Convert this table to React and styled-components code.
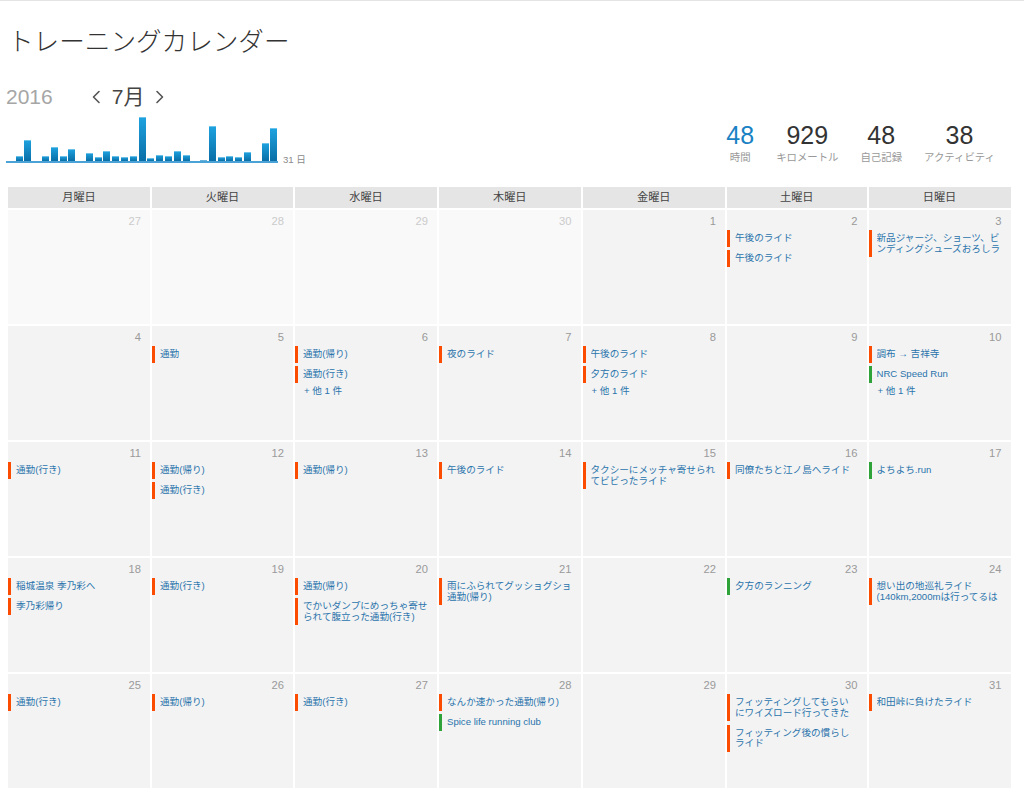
import React from 'react';
import styled, { createGlobalStyle } from 'styled-components';

const GlobalStyle = createGlobalStyle`
  html, body { margin: 0; padding: 0; background: #fff; }
  body {
    font-family: "Liberation Sans", "Noto Sans CJK JP", sans-serif;
    color: #333;
  }
`;

const Page = styled.div`
  border-top: 1px solid #e4e4e4;
  padding: 0 13px 10px 8px;
`;

const Top = styled.div`
  display: flex;
  justify-content: space-between;
  align-items: flex-end;
`;

const Left = styled.div`
  display: flex;
  flex-direction: column;
`;

const Title = styled.h1`
  margin: 28px 0 0;
  font-size: 25.6px;
  line-height: 26px;
  font-weight: 300;
  color: #333;
`;

const MonthRow = styled.div`
  display: flex;
  align-items: center;
  height: 24px;
  margin-top: 30px;
`;

const Year = styled.span`
  font-size: 21px;
  line-height: 24px;
  color: #a6a6a6;
  margin-left: -2px;
`;

const Nav = styled.div`
  display: flex;
  align-items: center;
  gap: 11px;
  margin-left: 38px;
`;

const Month = styled.span`
  font-size: 21px;
  line-height: 24px;
  color: #444;
`;

const ChartRow = styled.div`
  display: flex;
  align-items: flex-end;
  margin-top: 8px;
  margin-left: -2px;
`;

const Chart = styled.div`
  display: flex;
  align-items: flex-end;
  width: 272px;
  height: 44px;
  border-bottom: 2px solid #4aa2d6;
`;

const Slot = styled.div`
  flex: 1;
  display: flex;
  align-items: flex-end;
  justify-content: center;
  height: 100%;
`;

const Bar = styled.div`
  width: 7px;
  background: linear-gradient(#1ea3e0, #0a6ea6);
  box-shadow: inset 0 1px 0 rgba(255,255,255,0.35);
`;

const ChartLabel = styled.span`
  font-size: 9.6px;
  line-height: 11px;
  color: #8a8a8a;
  margin-left: 5px;
  margin-bottom: -2px;
`;

const Stats = styled.div`
  display: flex;
  margin-right: 5px;
  margin-bottom: -1px;
`;

const Stat = styled.div`
  display: flex;
  flex-direction: column;
  align-items: center;
  padding: 0 11px;
`;

const StatNum = styled.span`
  font-size: 25px;
  line-height: 24px;
  color: ${p => (p.$accent ? '#1a82c4' : '#333')};
`;

const StatLabel = styled.span`
  margin-top: 5px;
  font-size: 10.4px;
  line-height: 12px;
  color: #999;
`;

const Calendar = styled.div`
  display: grid;
  grid-template-columns: 142px 141px 142px 141.5px 142.5px 139.5px 142px;
  grid-template-rows: 21px repeat(5, 114px);
  gap: 2px;
  margin-top: 24px;
`;

const HeadCell = styled.div`
  background: #e5e5e5;
  font-size: 11.2px;
  line-height: 21px;
  text-align: center;
  color: #444;
`;

const Cell = styled.div`
  background: ${p => (p.$other ? '#f9f9f9' : '#f3f3f3')};
  padding-top: 5px;
  overflow: hidden;
  display: flex;
  flex-direction: column;
`;

const DayNum = styled.div`
  text-align: right;
  padding-right: 9px;
  font-size: 11.2px;
  line-height: 13px;
  color: ${p => (p.$other ? '#cbcbcb' : '#9a9a9a')};
`;

const Events = styled.div`
  display: flex;
  flex-direction: column;
  gap: 3.5px;
  margin-top: 2px;
  padding-right: 8.5px;
`;

const Event = styled.div`
  border-left: 3px solid ${p => (p.$type === 'run' ? '#2fa23a' : '#fc4c02')};
  padding: 3px 0 3px 5px;
`;

const EventText = styled.div`
  font-size: 9.6px;
  line-height: 10.6px;
  max-height: 21.2px;
  overflow: hidden;
  color: #2a74ac;
`;

const More = styled.div`
  padding-left: 9px;
  font-size: 9.6px;
  line-height: 10.6px;
  color: #2a74ac;
`;

const Chevron = ({ dir }) => (
  <svg width="10" height="16" viewBox="0 0 10 16" fill="none">
    <polyline
      points={dir === 'left' ? '8,2.5 2.5,8 8,13.5' : '2,2.5 7.5,8 2,13.5'}
      stroke="#555"
      strokeWidth="1.6"
      strokeLinecap="round"
      strokeLinejoin="round"
    />
  </svg>
);

const bars = [0, 5, 21, 0, 5, 14, 5.5, 12, 0, 8, 4, 10, 5.5, 4, 5.5, 44, 3, 6, 5, 10, 6, 0, 1.3, 35, 4.5, 5, 4.5, 9, 0, 18, 33];

const heads = ['月曜日', '火曜日', '水曜日', '木曜日', '金曜日', '土曜日', '日曜日'];

const R = 'ride';
const N = 'run';

const cells = [
  { d: 27, other: true }, { d: 28, other: true }, { d: 29, other: true }, { d: 30, other: true },
  { d: 1 },
  { d: 2, ev: [['午後のライド', R], ['午後のライド', R]] },
  { d: 3, ev: [['新品ジャージ、ショーツ、ビンディングシューズおろしライド', R]] },

  { d: 4 },
  { d: 5, ev: [['通勤', R]] },
  { d: 6, ev: [['通勤(帰り)', R], ['通勤(行き)', R]], more: 1 },
  { d: 7, ev: [['夜のライド', R]] },
  { d: 8, ev: [['午後のライド', R], ['夕方のライド', R]], more: 1 },
  { d: 9 },
  { d: 10, ev: [['調布 → 吉祥寺', R], ['NRC Speed Run', N]], more: 1 },

  { d: 11, ev: [['通勤(行き)', R]] },
  { d: 12, ev: [['通勤(帰り)', R], ['通勤(行き)', R]] },
  { d: 13, ev: [['通勤(帰り)', R]] },
  { d: 14, ev: [['午後のライド', R]] },
  { d: 15, ev: [['タクシーにメッチャ寄せられてビビったライド', R]] },
  { d: 16, ev: [['同僚たちと江ノ島へライド', R]] },
  { d: 17, ev: [['よちよち.run', N]] },

  { d: 18, ev: [['稲城温泉 季乃彩へ', R], ['季乃彩帰り', R]] },
  { d: 19, ev: [['通勤(行き)', R]] },
  { d: 20, ev: [['通勤(帰り)', R], ['でかいダンプにめっちゃ寄せられて腹立った通勤(行き)', R]] },
  { d: 21, ev: [['雨にふられてグッショグショ通勤(帰り)', R]] },
  { d: 22 },
  { d: 23, ev: [['夕方のランニング', N]] },
  { d: 24, ev: [['想い出の地巡礼ライド (140km,2000mは行ってるはず)', R]] },

  { d: 25, ev: [['通勤(行き)', R]] },
  { d: 26, ev: [['通勤(帰り)', R]] },
  { d: 27, ev: [['通勤(行き)', R]] },
  { d: 28, ev: [['なんか速かった通勤(帰り)', R], ['Spice life running club', N]] },
  { d: 29 },
  { d: 30, ev: [['フィッティングしてもらいにワイズロード行ってきた', R], ['フィッティング後の慣らしライド', R]] },
  { d: 31, ev: [['和田峠に負けたライド', R]] },
];

const stats = [
  { n: '48', l: '時間', accent: true },
  { n: '929', l: 'キロメートル' },
  { n: '48', l: '自己記録' },
  { n: '38', l: 'アクティビティ' },
];

export default function App() {
  return (
    <Page>
      <GlobalStyle />
      <Top>
        <Left>
          <Title>トレーニングカレンダー</Title>
          <MonthRow>
            <Year>2016</Year>
            <Nav>
              <Chevron dir="left" />
              <Month>7月</Month>
              <Chevron dir="right" />
            </Nav>
          </MonthRow>
          <ChartRow>
            <Chart>
              {bars.map((h, i) => (
                <Slot key={i}>{h > 0 && <Bar style={{ height: `${h}px` }} />}</Slot>
              ))}
            </Chart>
            <ChartLabel>31 日</ChartLabel>
          </ChartRow>
        </Left>
        <Stats>
          {stats.map((s, i) => (
            <Stat key={i}>
              <StatNum $accent={s.accent}>{s.n}</StatNum>
              <StatLabel>{s.l}</StatLabel>
            </Stat>
          ))}
        </Stats>
      </Top>
      <Calendar>
        {heads.map(h => (
          <HeadCell key={h}>{h}</HeadCell>
        ))}
        {cells.map((c, i) => (
          <Cell key={i} $other={c.other}>
            <DayNum $other={c.other}>{c.d}</DayNum>
            {(c.ev || c.more) && (
              <Events>
                {(c.ev || []).map(([t, type], j) => (
                  <Event key={j} $type={type}>
                    <EventText>{t}</EventText>
                  </Event>
                ))}
                {c.more && <More>+ 他 {c.more} 件</More>}
              </Events>
            )}
          </Cell>
        ))}
      </Calendar>
    </Page>
  );
}
